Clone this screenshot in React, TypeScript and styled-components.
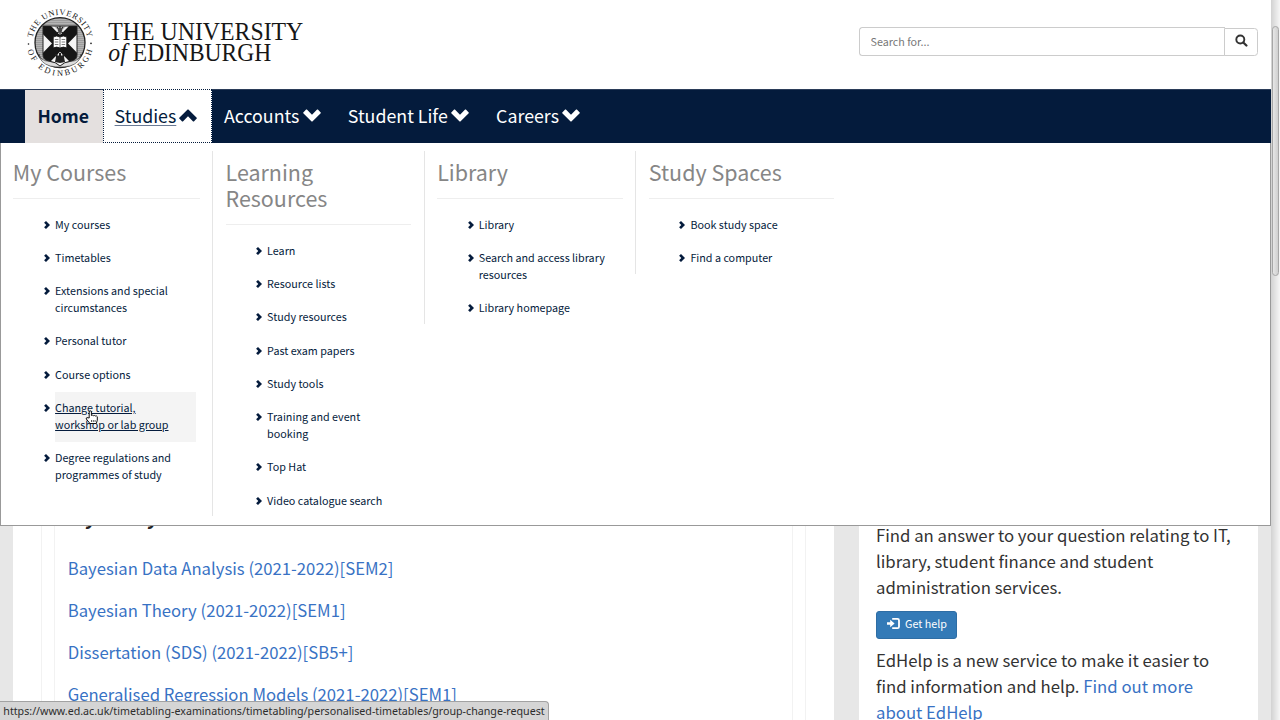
import React from 'react';
import styled, { createGlobalStyle, css } from 'styled-components';

const NAVY = '#041b3c';
const SANS = '"Noto Sans CJK SC", "Open Sans", sans-serif';

const GlobalStyle = createGlobalStyle`
  * { box-sizing: border-box; }
  body { margin: 0; background: #fff; font-family: ${SANS}; overflow: hidden; }
  ul { list-style: none; margin: 0; padding: 0; }
  h2, h3, p { margin: 0; font-weight: 400; }
  a { color: inherit; text-decoration: none; }
  svg { display: block; }
`;

const Window = styled.div`
  display: flex;
  width: 1280px;
  height: 720px;
  overflow: hidden;
  position: relative;
`;

const Page = styled.div`
  display: flex;
  flex-direction: column;
  width: 1271px;
  height: 720px;
  position: relative;
`;

const Header = styled.header`
  display: flex;
  justify-content: space-between;
  flex: none;
  height: 89px;
  padding: 0 13px 0 20px;
`;

const SearchForm = styled.form`
  display: flex;
  margin-top: 27px;
  height: 29px;
`;

const SearchInput = styled.input`
  width: 366px;
  height: 29px;
  padding: 0 10.5px 1px;
  border: 1px solid #ccc;
  border-right: none;
  border-radius: 3.5px 0 0 3.5px;
  font: 10.74px ${SANS};
  color: #555;
  outline: none;
  &::placeholder { color: #777; opacity: 1; }
`;

const SearchButton = styled.button`
  display: flex;
  width: 34px;
  height: 28px;
  margin: 1px 0 0 -1px;
  padding: 5px 0 0 10px;
  border: 1px solid #ccc;
  border-radius: 0 3.5px 3.5px 0;
  background: #fff;
  color: #333;
`;

const Nav = styled.nav`
  display: flex;
  flex: none;
  height: 54px;
  padding-left: 25px;
  background: ${NAVY};
  border-top: 1px solid #2b3d59;
`;

const NavItem = styled.a<{ $variant?: 'current' | 'open'; $width: number }>`
  display: flex;
  align-items: center;
  width: ${(p) => p.$width}px;
  height: 53px;
  padding: 0 0 3px 12.5px;
  font-size: 17.8px;
  line-height: 26px;
  color: #fff;
  ${(p) =>
    p.$variant === 'current' &&
    css`
      padding-bottom: 2px;
      background: #e4e0df;
      color: ${NAVY};
      font-weight: 700;
      font-size: 17.6px;
    `}
  ${(p) =>
    p.$variant === 'open' &&
    css`
      height: 54px;
      margin-top: -1px;
      padding: 0 0 2px 10.6px;
      background: #fff;
      color: ${NAVY};
      border: 1px dotted ${NAVY};
      span {
        text-decoration: underline;
        text-decoration-thickness: 1px;
        text-decoration-color: #6a7a94;
        text-underline-offset: 2px;
      }
    `}
  svg { margin-left: 3.2px; }
`;

const MegaMenu = styled.div`
  position: absolute;
  left: 0;
  top: 143px;
  z-index: 2;
  display: flex;
  align-items: flex-start;
  width: 1271px;
  height: 383px;
  padding-top: 8.33px;
  background: #fff;
  border: 1px solid #999;
  border-top: none;
`;

const MenuList = styled.ul`
  padding: 0 4px 0 30.6px;
  margin-bottom: -1.4px;
`;

const MenuColumn = styled.section`
  width: 211.67px;
  padding: 0 12.5px;
  border-left: 1px solid #e5e5e5;
  &:first-child {
    width: 211px;
    padding-left: 11.8px;
    border-left: none;
  }
  &:first-child ${MenuList} {
    padding-left: 31.3px;
  }
`;

const MenuTitle = styled.h2`
  padding: 7.7px 0 12.6px;
  margin-bottom: 9.8px;
  border-bottom: 1px solid #eee;
  font-size: 21.48px;
  line-height: 26px;
  color: #868686;
`;

const MenuItem = styled.li`
  display: flex;
  color: ${NAVY};
  svg { flex: none; margin: 12.4px 5px 0 0; }
`;

const MenuLink = styled.a<{ $hovered?: boolean }>`
  flex: 1;
  padding: 8.33px 12px 8.33px 0;
  font-size: 10.76px;
  line-height: 16.67px;
  white-space: pre-line;
  ${(p) =>
    p.$hovered &&
    css`
      background: #f4f4f4;
      text-decoration: underline;
      text-decoration-thickness: 1px;
    `}
`;

const Body = styled.main`
  display: flex;
  flex: 1;
  gap: 25px;
  padding: 0 13px;
  background: #e7e7e7;
  overflow: hidden;
`;

const CoursesCard = styled.section`
  width: 821px;
  padding: 0 28px;
  background: #fff;
`;

const Frame = styled.div`
  height: 100%;
  padding: 0 12px;
  border: solid #f2f2f2;
  border-width: 0 1px;
`;

const CoursesPanel = styled.div`
  height: 100%;
  padding: 360px 12.7px 0;
  border: solid #f2f2f2;
  border-width: 0 1px;
`;

const PanelTitle = styled.h3`
  font-size: 20px;
  font-weight: 700;
  line-height: 26px;
  color: #222;
  margin-bottom: 18px;
`;

const CourseLink = styled.a`
  display: block;
  font-size: 16.7px;
  line-height: 42px;
  color: #3872c4;
`;

const HelpCard = styled.aside`
  width: 399px;
  padding: 379px 17px 0;
  background: #fff;
`;

const HelpText = styled.p`
  font-size: 16.74px;
  line-height: 26.2px;
  color: #333;
  white-space: pre-line;
  a { color: #3872c4; }
`;

const HelpButton = styled.a`
  display: flex;
  width: 81px;
  height: 28px;
  margin: 10.2px 0 8px;
  padding: 0 0 1px 10px;
  align-items: center;
  gap: 5px;
  border: 1px solid #2e6da4;
  border-radius: 3px;
  background: #337ab7;
  color: #fff;
  font-size: 10.74px;
  line-height: 16px;
`;

const Scrollbar = styled.div`
  width: 9px;
  height: 720px;
  padding: 26px 0 0 1px;
  background: linear-gradient(to right, #d2d2d2, #f6f6f6);
`;

const Thumb = styled.div`
  width: 7px;
  height: 250px;
  border: 1px solid #a6a6a6;
  border-radius: 4px;
  background: linear-gradient(to right, #e6e6e6, #cfcfcf);
`;

const StatusBar = styled.div`
  position: absolute;
  left: 0;
  bottom: 0;
  z-index: 3;
  width: 549px;
  height: 19px;
  padding-left: 3.3px;
  background: #d5d5d5;
  border: 1px solid #a2a2a2;
  border-width: 1px 1px 0 0;
  border-radius: 0 4px 0 0;
  font: 10.68px/19px "Noto Sans", sans-serif;
  color: #2c2c2c;
  white-space: nowrap;
`;

const Pointer = styled.svg`
  position: absolute;
  left: 85px;
  top: 410px;
  z-index: 4;
`;

const Chevron = ({ up }: { up?: boolean }) => (
  <svg width="18" height="13" viewBox="0 0 18 13">
    <path
      transform={up ? 'matrix(1 0 0 -1 0 13)' : undefined}
      fill="currentColor"
      d="M0.3 3.4 3.1 .6q.4-.4.8 0L9 5.7 14.1 .6q.4-.4.8 0l2.8 2.8q.4.4 0 .8l-8.3 8.2q-.4.4-.8 0L.3 4.2q-.4-.4 0-.8z"
    />
  </svg>
);

const Bullet = () => (
  <svg width="6" height="8" viewBox="0 0 6 8">
    <path fill="currentColor" d="M2 0 6 4 2 8 .1 6.3 2.3 4 .1 1.7z" />
  </svg>
);

const SearchIcon = () => (
  <svg width="13" height="13" viewBox="0 0 13 13" fill="none" stroke="currentColor">
    <circle cx="5.3" cy="5.5" r="4" strokeWidth="1.9" />
    <path d="M8.3 8.5 11.4 11.5" strokeWidth="2.3" strokeLinecap="round" />
  </svg>
);

const LogInIcon = () => (
  <svg width="13" height="12" viewBox="0 0 13 12">
    <path fill="currentColor" d="M0 4.2h3.2V1.7L7.600 5.500 3.200 9.300V6.800H0z" />
    <path
      fill="none"
      stroke="currentColor"
      strokeWidth="1.8"
      d="M5.2 .9h5.3a1.500 1.500 0 0 1 1.500 1.500v6.300a1.500 1.500 0 0 1-1.500 1.500H5.200"
    />
  </svg>
);

const Logo = () => (
  <svg width="300" height="88" viewBox="20 0 300 88" fontFamily="'Liberation Serif', serif" fill="#161616">
    <defs>
      <path id="ringTop" d="M32.200 42.700a27.800 27.800 0 0 1 55.600 0" />
      <path id="ringBottom" d="M26.800 42.700a33.200 33.200 0 0 0 66.400 0" />
      <pattern id="hatch" width="2" height="2" patternUnits="userSpaceOnUse">
        <rect width="2" height="2" fill="#b4b4b4" />
        <rect width="2" height="1" fill="#9c9c9c" />
      </pattern>
      <clipPath id="shield">
        <path d="M43 26h34v29q0 5-6 6-7 1-11 5-4-4-11-5-6-1-6-6z" />
      </clipPath>
    </defs>
    <circle cx="60" cy="42.700" r="25" fill="url(#hatch)" stroke="#222" strokeWidth="1.300" />
    <path d="M39 54q1 7 11 7.500 7 .5 10 3.500 3-3 10-3.500Q80 61 81 54q-1 9-11 12-6 1-10 1t-10-1q-10-3-11-12z" fill="#ddd" stroke="#444" strokeWidth=".6" />
    <g clipPath="url(#shield)">
      <rect x="42" y="25" width="36" height="42" fill="#f4f4f4" />
      <path d="M43 26 77 61M77 26 43 61" stroke="#161616" strokeWidth="11.500" />
      <path d="M54 26h12l-6 7z" fill="#bbb" />
    </g>
    <path d="M43 26h34v29q0 5-6 6-7 1-11 5-4-4-11-5-6-1-6-6z" fill="none" stroke="#222" />
    <path d="M60 35v-4M57 27l1.500 2M63 27l-1.500 2M60 26v2M56 33l3-1M64 33l-3-1" stroke="#222" strokeWidth="1.200" />
    <circle cx="60" cy="30" r="2.200" fill="#444" />
    <path d="M53.200 37q3.500-2 6.800 0 3.300-2 6.800 0v11q-3.500-1.800-6.800 0-3.300-1.800-6.800 0z" fill="#fff" stroke="#161616" strokeWidth=".9" />
    <path d="M60 37v11M54.800 39.500h3.600M54.800 42h3.600M54.800 44.500h3.600M61.600 39.500h3.600M61.600 42h3.600M61.600 44.500h3.600" stroke="#444" strokeWidth=".7" />
    <path d="M55 62l1-5-1-3h2.500v1.500H59V53h2v2.500h1.500V54H65l-1 3 1 5-5 1z" fill="#222" />
    <g fontSize="8.300">
      <text>
        <textPath href="#ringTop" startOffset="5" textLength="77">THE UNIVERSITY</textPath>
      </text>
      <text>
        <textPath href="#ringBottom" startOffset="7.500" textLength="89">OF EDINBURGH</textPath>
      </text>
    </g>
    <circle cx="28.500" cy="44" r=".8" />
    <circle cx="91" cy="43.400" r=".8" />
    <g>
      <text x="108.300" y="40.200" fontSize="24.200" textLength="195" lengthAdjust="spacingAndGlyphs">THE UNIVERSITY</text>
      <text x="108.300" y="61.300" fontSize="25" fontStyle="italic" textLength="18.500" lengthAdjust="spacingAndGlyphs">of</text>
      <text x="132.800" y="61.300" fontSize="24.200" textLength="138.300" lengthAdjust="spacingAndGlyphs">EDINBURGH</text>
    </g>
  </svg>
);

const COLUMNS = [
  {
    title: 'My Courses',
    items: [
      'My courses',
      'Timetables',
      'Extensions and special\ncircumstances',
      'Personal tutor',
      'Course options',
      'Change tutorial,\nworkshop or lab group',
      'Degree regulations and\nprogrammes of study',
    ],
  },
  {
    title: 'Learning Resources',
    items: [
      'Learn',
      'Resource lists',
      'Study resources',
      'Past exam papers',
      'Study tools',
      'Training and event\nbooking',
      'Top Hat',
      'Video catalogue search',
    ],
  },
  { title: 'Library', items: ['Library', 'Search and access library\nresources', 'Library homepage'] },
  { title: 'Study Spaces', items: ['Book study space', 'Find a computer'] },
];

const HOVERED = 'Change tutorial,\nworkshop or lab group';

const COURSES = [
  'Bayesian Data Analysis (2021-2022)[SEM2]',
  'Bayesian Theory (2021-2022)[SEM1]',
  'Dissertation (SDS) (2021-2022)[SB5+]',
  'Generalised Regression Models (2021-2022)[SEM1]',
];

export default function App() {
  return (
    <>
      <GlobalStyle />
      <Window>
        <Page>
          <Header>
            <Logo />
            <SearchForm>
              <SearchInput placeholder="Search for..." />
              <SearchButton type="button" aria-label="Search">
                <SearchIcon />
              </SearchButton>
            </SearchForm>
          </Header>
          <Nav>
            <NavItem $variant="current" $width={78}>Home</NavItem>
            <NavItem $variant="open" $width={108.5}>
              <span>Studies</span>
              <Chevron up />
            </NavItem>
            <NavItem $width={123.8}>
              Accounts
              <Chevron />
            </NavItem>
            <NavItem $width={148.3}>
              Student Life
              <Chevron />
            </NavItem>
            <NavItem $width={112}>
              Careers
              <Chevron />
            </NavItem>
          </Nav>
          <MegaMenu>
            {COLUMNS.map((column) => (
              <MenuColumn key={column.title}>
                <MenuTitle>{column.title}</MenuTitle>
                <MenuList>
                  {column.items.map((item) => (
                    <MenuItem key={item}>
                      <Bullet />
                      <MenuLink $hovered={item === HOVERED}>{item}</MenuLink>
                    </MenuItem>
                  ))}
                </MenuList>
              </MenuColumn>
            ))}
          </MegaMenu>
          <Body>
            <CoursesCard>
              <Frame>
                <CoursesPanel>
                  <PanelTitle>My Study</PanelTitle>
                  {COURSES.map((course) => (
                    <CourseLink key={course}>{course}</CourseLink>
                  ))}
                </CoursesPanel>
              </Frame>
            </CoursesCard>
            <HelpCard>
              <HelpText>
                {'Find an answer to your question relating to IT,\nlibrary, student finance and student\nadministration services.'}
              </HelpText>
              <HelpButton>
                <LogInIcon />
                Get help
              </HelpButton>
              <HelpText>
                {'EdHelp is a new service to make it easier to\nfind information and help. '}
                <a>{'Find out more\nabout EdHelp'}</a>
              </HelpText>
            </HelpCard>
          </Body>
        </Page>
        <Scrollbar>
          <Thumb />
        </Scrollbar>
        <Pointer width="14" height="15" viewBox="0 0 14 15">
          <path
            fill="#fff"
            stroke="#111"
            strokeWidth="1"
            strokeLinejoin="round"
            d="M4.200 8V2q0-1.200 1.100-1.200T6.400 2v3.500q1-.8 2 .2 1-.6 1.900.3 1.200-.6 2 .7v3.500l-1 3.300H5L1.300 9q-.4-1.200.7-1.400z"
          />
          <path stroke="#111" strokeWidth=".7" d="M6.500 10v2M8.300 10v2M10.100 10v2" />
        </Pointer>
        <StatusBar>
          https://www.ed.ac.uk/timetabling-examinations/timetabling/personalised-timetables/group-change-request
        </StatusBar>
      </Window>
    </>
  );
}
